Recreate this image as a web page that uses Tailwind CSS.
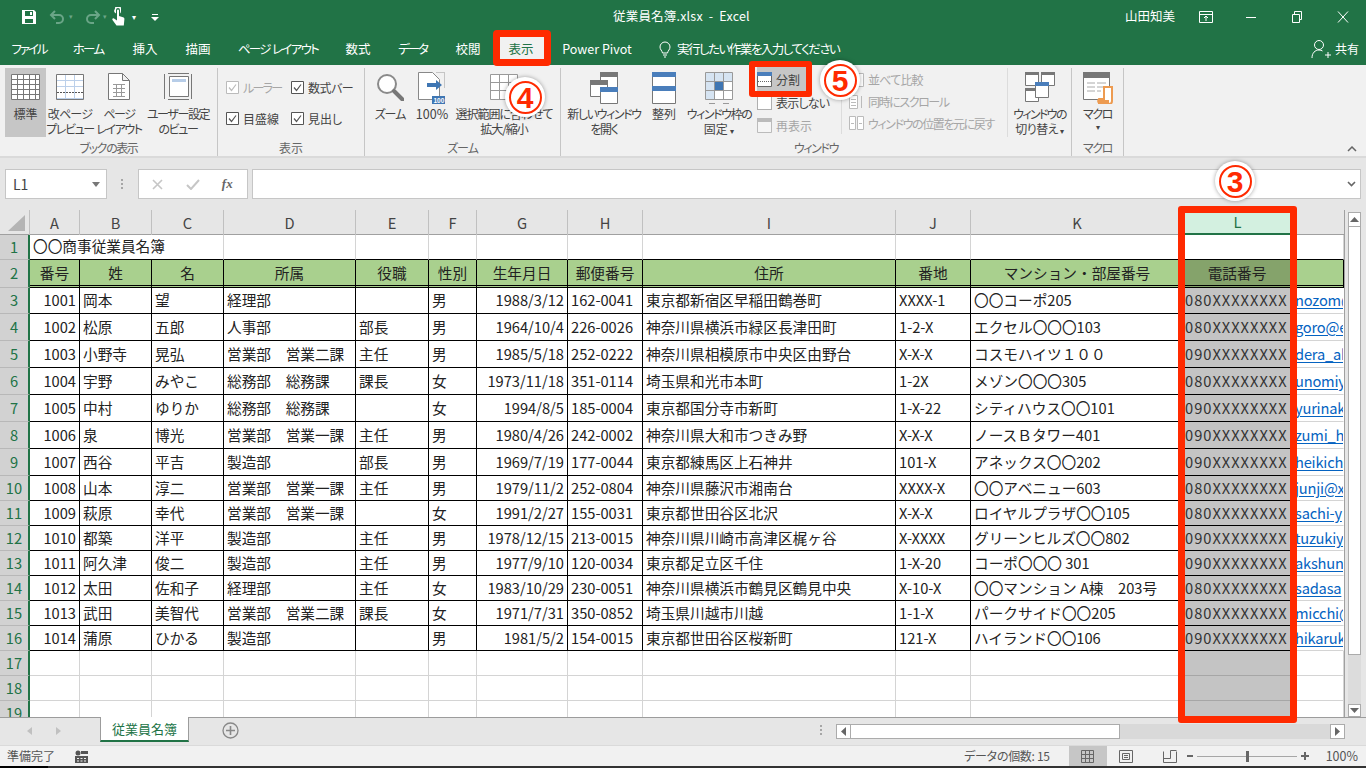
<!DOCTYPE html>
<html lang="ja">
<head>
  <meta charset="UTF-8">
  <title>従業員名簿.xlsx - Excel</title>
  <script src="https://cdn.jsdelivr.net/npm/@tailwindcss/browser@4"></script>
</head>
<body class="relative w-[1366px] h-[768px] overflow-hidden bg-[#e6e6e6] font-['Noto_Sans_CJK_JP','Noto_Sans',sans-serif] text-[#444] text-[12px]">

  <!-- Title bar + tabs -->
  <header class="h-[65px] bg-[#217346] text-white [font-feature-settings:'palt']">
    <div class="relative flex items-center h-[33px]">
      <div class="flex items-center pl-[21px]">
        <svg class="w-[16px] h-[16px]" viewBox="0 0 16 16"><path fill="#fff" d="M1 1h12l2 2v12H1z"/><path fill="#217346" d="M4 2h8v5H4zM4 10h8v4H4z"/><path fill="#fff" d="M9 3h2v3H9z"/></svg>
        <svg class="w-[18px] h-[16px] ml-[12px]" viewBox="0 0 18 16" fill="none" stroke="#6aa587" stroke-width="2"><path d="M6 2 2 6l4 4M2 6h8a4 4 0 0 1 0 8H7"/></svg>
        <span class="ml-[2px] text-[7px] text-[#6aa587]">▾</span>
        <svg class="w-[18px] h-[16px] ml-[10px]" viewBox="0 0 18 16" fill="none" stroke="#6aa587" stroke-width="2"><path d="m12 2 4 4-4 4M16 6H8a4 4 0 0 0 0 8h3"/></svg>
        <span class="ml-[2px] text-[7px] text-[#6aa587]">▾</span>
        <svg class="w-[16px] h-[20px] ml-[3px]" viewBox="0 0 16 20"><path fill="#fff" d="M5 1.5a3 3 0 0 1 6 0V4a4 4 0 0 1-1 2.6V3a2 2 0 0 0-4 0v3.6A4 4 0 0 1 4 4z"/><path fill="#fff" d="M7 3.5a1 1 0 0 1 2 0V9l4 1.2c1 .3 1.5 1 1.4 2l-.6 6.3H6.500L2.500 13c-.7-1 .5-2.200 1.500-1.400L7 13.500z"/></svg>
        <span class="ml-[6px] text-[8px]">▾</span>
        <svg class="w-[8px] h-[8px] ml-[15px]" viewBox="0 0 8 8" fill="#fff"><path d="M1 1h6v1H1zM0 4h8L4 8z"/></svg>
      </div>
      <div class="absolute left-[613px] top-[8px] whitespace-pre text-[12.500px] leading-[16px] tracking-[0.2px]">従業員名簿.xlsx  -  Excel</div>
      <div class="ml-auto flex items-center">
        <span class="text-[12.500px] mr-[24px]">山田知美</span>
        <svg class="w-[14px] h-[14px] mr-[32px]" viewBox="0 0 14 14" fill="none" stroke="#fff"><path d="M.5 1.500h13v11H.5zM.5 4.500h13M7 11V6M5 8l2-2 2 2"/></svg>
        <svg class="w-[12px] h-[12px] mr-[34px]" viewBox="0 0 12 12" stroke="#fff"><path d="M1 6.500h10"/></svg>
        <svg class="w-[12px] h-[12px] mr-[34px]" viewBox="0 0 12 12" fill="none" stroke="#fff"><path d="M1.500 3.500h7v8h-7zM3.500 3.500v-3h7v8h-2"/></svg>
        <svg class="w-[12px] h-[12px] mr-[17px]" viewBox="0 0 12 12" stroke="#fff"><path d="m1 .5 10 11M11 .5 1 11.500"/></svg>
      </div>
    </div>
    <nav class="flex items-center h-[32px] text-[12.500px]">
      <span class="w-[58px] text-center tracking-[-2px]">ファイル</span>
      <span class="w-[60px] text-center tracking-[-1.700px]">ホーム</span>
      <span class="w-[54px] text-center">挿入</span>
      <span class="w-[52px] text-center">描画</span>
      <span class="w-[108px] text-center whitespace-pre tracking-[-1.700px]">ページ  レイアウト</span>
      <span class="w-[52px] text-center">数式</span>
      <span class="w-[57px] text-center tracking-[-2px]">データ</span>
      <span class="w-[54px] text-center">校閲</span>
      <span class="w-[52px] h-[28px] mt-[4px] pb-[4px] flex items-center justify-center bg-[#f1f1f1] text-[#217346]">表示</span>
      <span class="w-[100px] text-center">Power Pivot</span>
      <svg class="w-[12px] h-[17px] ml-[12px]" viewBox="0 0 12 17" fill="none" stroke="#fff"><path d="M3.500 12C3 9.500 1 8.500 1 6a5 5 0 0 1 10 0c0 2.500-2 3.500-2.500 6zM4 14h4M5 16h2"/></svg>
      <span class="ml-[6px] tracking-[-1.500px]">実行したい作業を入力してください</span>
      <svg class="ml-auto w-[20px] h-[20px]" viewBox="0 0 20 20" fill="none" stroke="#fff"><circle cx="8" cy="6" r="4.500"/><path d="M1 19c0-5 3-8 7-8 1.500 0 2.500.4 3.500 1M14 16h6M17 13v6"/></svg>
      <span class="ml-[4px] mr-[7px] text-[12px]">共有</span>
    </nav>
  </header>

  <!-- Ribbon -->
  <section class="relative flex h-[93px] bg-[#f1f1f1] border-b-2 border-[#dadada] [font-feature-settings:'palt'] text-[12px] leading-[15px] whitespace-nowrap tracking-[-1.400px]">

    <!-- ブックの表示 -->
    <div class="flex flex-col shrink-0 w-[218px] mt-[3px] border-r border-[#c6c6c6]">
      <div class="flex h-[74px] pl-[5px]">
        <div class="flex flex-col items-center shrink-0 w-[41px] h-[69px] pt-[6px] bg-[#c6c6c6] tracking-normal">
          <svg class="shrink-0 w-[31px] h-[26px] mb-[6px]" viewBox="0 0 31 26" fill="#fff" stroke="#777"><path d="M1.500.5h28v25h-28z"/><path d="M1 5.500h29M1 10.500h29M1 15.500h29M1 20.500h29M7.500 0v26M13.500 0v26M19.500 0v26M25.500 0v26" fill="none"/></svg>
          <span>標準</span>
        </div>
        <div class="flex flex-col items-center shrink-0 w-[48px] pt-[6px] text-center">
          <svg class="shrink-0 w-[28px] h-[26px] mb-[6px]" viewBox="0 0 28 26" fill="#fff" stroke="#bcd0ea"><path d="M.5.5h27v25H.5z" stroke="#777"/><path d="M1 6.500h26M1 12.500h26M1 24.500h26M9.500 1v24M18.500 1v24" fill="none"/><path d="M1 18.500h26" stroke="#555" stroke-dasharray="2 1"/></svg>
          <span><span class="tracking-[-0.800px]">改ページ</span><br>プレビュー</span>
        </div>
        <div class="flex flex-col items-center shrink-0 w-[50px] pt-[5px] text-center">
          <svg class="shrink-0 w-[22px] h-[27px] mb-[6px]" viewBox="0 0 22 27" fill="#fff" stroke="#777"><path d="M.5.5h14l7 7v19H.5zM14.500.5v7h7"/><path d="M5 11.500h12M5 15.500h12M5 19.500h12M5 23.500h12M8.500 11v13M13.500 11v13" fill="none" stroke="#999"/></svg>
          <span>ページ<br>レイアウト</span>
        </div>
        <div class="flex flex-col items-center shrink-0 w-[68px] pt-[5px] text-center">
          <svg class="shrink-0 w-[28px] h-[27px] mb-[6px]" viewBox="0 0 28 27" fill="none" stroke="#777"><path d="M5.500 3.500h19v20h-19z" fill="#fff"/><path fill="#b7cde8" stroke="none" d="M8 6h14v3H8z"/><path d="M.5 1v25M27.500 1v25M4 .5h21M4 26.500h21"/></svg>
          <span>ユーザー設定<br>のビュー</span>
        </div>
      </div>
      <div class="text-center text-[#666] leading-[16px]">ブックの表示</div>
    </div>

    <!-- 表示 -->
    <div class="flex flex-col shrink-0 w-[147px] mt-[3px] border-r border-[#c6c6c6]">
      <div class="h-[74px] pl-[8px] pt-[11px] flex flex-col gap-[15px] tracking-normal">
        <div class="flex h-[16px] items-center">
          <span class="flex items-center w-[65px] text-[#a6a6a6] tracking-[-1.700px]">
            <svg class="shrink-0 w-[13px] h-[13px] mr-[4px]" viewBox="0 0 13 13" fill="#fff" stroke="#bbb"><path d="M.5.5h12v12H.5z"/><path d="m3 6.500 2.500 3L10 3.500" fill="none" stroke-width="1.200"/></svg>ルーラー
          </span>
          <span class="flex items-center tracking-[-0.500px]">
            <svg class="shrink-0 w-[13px] h-[13px] mr-[4px]" viewBox="0 0 13 13" fill="#fff" stroke="#555"><path d="M.5.5h12v12H.5z"/><path d="m3 6.500 2.500 3L10 3.500" fill="none" stroke-width="1.200"/></svg>数式バー
          </span>
        </div>
        <div class="flex h-[16px] items-center">
          <span class="flex items-center w-[65px]">
            <svg class="shrink-0 w-[13px] h-[13px] mr-[4px]" viewBox="0 0 13 13" fill="#fff" stroke="#555"><path d="M.5.5h12v12H.5z"/><path d="m3 6.500 2.500 3L10 3.500" fill="none" stroke-width="1.200"/></svg>目盛線
          </span>
          <span class="flex items-center">
            <svg class="shrink-0 w-[13px] h-[13px] mr-[4px]" viewBox="0 0 13 13" fill="#fff" stroke="#555"><path d="M.5.5h12v12H.5z"/><path d="m3 6.500 2.500 3L10 3.500" fill="none" stroke-width="1.200"/></svg>見出し
          </span>
        </div>
      </div>
      <div class="text-center text-[#666] leading-[16px] tracking-normal">表示</div>
    </div>

    <!-- ズーム -->
    <div class="flex flex-col shrink-0 w-[196px] mt-[3px] border-r border-[#c6c6c6]">
      <div class="flex h-[74px]">
        <div class="flex flex-col items-center shrink-0 w-[50px] pt-[5px] tracking-[-1px]">
          <svg class="shrink-0 w-[28px] h-[28px] mb-[5px]" viewBox="0 0 28 28" fill="none"><circle cx="11" cy="11" r="9" stroke="#8a8a8a" stroke-width="2" fill="#fff"/><path d="m18 18 8.500 8.500" stroke="#777" stroke-width="4" stroke-linecap="round"/></svg>
          <span>ズーム</span>
        </div>
        <div class="flex flex-col items-center shrink-0 w-[34px] pt-[4px] tracking-normal">
          <svg class="shrink-0 w-[28px] h-[32px] mb-[2px]" viewBox="0 0 28 32"><path d="M.5.5h14l7 7v20H.5z" fill="#fff" stroke="#888"/><path d="M18.500.5h8v16" fill="none" stroke="#999" stroke-dasharray="1 1"/><path d="M9 11h9V8l6 5-6 5v-3H9z" fill="#3f76b3"/><path d="M14 24h13v8H14z" fill="#3f76b3"/><text x="15.500" y="31" font-size="6.500" font-weight="700" fill="#fff" font-family="Liberation Sans">100</text></svg>
          <span class="text-[12.500px]">100%</span>
        </div>
        <div class="flex flex-col items-center shrink-0 w-[98px] ml-[6px] pt-[6px] text-center tracking-[-1px]">
          <svg class="shrink-0 w-[28px] h-[26px] mb-[6px]" viewBox="0 0 28 26" fill="#fff" stroke="#999"><path d="M.5.5h27v25H.5zM.5 8.500h27M.5 16.500h27M9.500 0v26M18.500 0v26"/></svg>
          <span>選択範囲に合わせて<br>拡大/縮小</span>
        </div>
      </div>
      <div class="text-center text-[#666] leading-[16px] tracking-[-1px]">ズーム</div>
    </div>

    <!-- ウィンドウ -->
    <div class="flex flex-col shrink-0 w-[511px] mt-[3px] border-r border-[#c6c6c6]">
      <div class="flex h-[74px]">
        <div class="flex flex-col items-center shrink-0 w-[86px] pt-[4px] text-center">
          <svg class="shrink-0 w-[28px] h-[32px] mb-[2px]" viewBox="0 0 28 32" fill="#fff" stroke="#777"><path d="M10.500.5h17v16h-17z"/><path d="M10 0h18v5H10z" fill="#777" stroke="none"/><path d="M.5 8.500h17v16H.5z"/><path d="M0 8h18v5H0z" fill="#777" stroke="none"/><path d="M10.500 15.500h17v16h-17z"/><path d="M10 15h18v5H10z" fill="#4a7ebb" stroke="none"/></svg>
          <span>新しいウィンドウ<br>を開く</span>
        </div>
        <div class="flex flex-col items-center shrink-0 w-[34px] pt-[4px] tracking-normal">
          <svg class="shrink-0 w-[24px] h-[32px] mb-[2px]" viewBox="0 0 24 32" fill="#fff" stroke="#777"><path d="M.5.5h23v31h-23z"/><path d="M0 0h24v5H0zM0 14h24v5H0z" fill="#4a7ebb" stroke="none"/></svg>
          <span>整列</span>
        </div>
        <div class="flex flex-col items-center shrink-0 w-[76px] pt-[4px] text-center">
          <svg class="shrink-0 w-[28px] h-[32px] mb-[2px]" viewBox="0 0 28 32" fill="#fff" stroke="#999"><path d="M.5.5h27v27H.5zM.5 9.500h27M.5 18.500h27M9.500 0v28M18.500 0v28M4 31.500h6M18 31.500h6"/><path d="M1 1h8v8H1zM1 10h8v8H1zM1 19h8v8H1zM10 1h8v8h-8zM19 1h8v8h-8z" fill="#d6e4f2" stroke="none"/><path d="M10 10h8v8h-8z" fill="#3f76b3" stroke="none"/></svg>
          <span>ウィンドウ枠の<br><span class="tracking-normal">固定 <span class="text-[8px]">▾</span></span></span>
        </div>
        <div class="flex flex-col shrink-0 w-[84px] text-[12px]">
          <div class="flex items-center w-[52px] h-[26px] -mt-[2px] bg-[#c6c6c6] tracking-normal">
            <svg class="shrink-0 w-[15px] h-[15px] mr-[4px]" viewBox="0 0 15 15" fill="#fff" stroke="#666"><path d="M.5.5h14v14H.5z"/><path d="M0 0h15v4H0z" fill="#4a7ebb" stroke="none"/><path d="M1 9.500h13" stroke-dasharray="1 1"/></svg>分割
          </div>
          <div class="flex items-center h-[23px] -mt-[1px] tracking-[-0.800px]">
            <svg class="shrink-0 w-[15px] h-[15px] mr-[4px]" viewBox="0 0 15 15" fill="#fff" stroke="#666" stroke-dasharray="1 1"><path d="M.5.5h14v14H.5z"/></svg>表示しない
          </div>
          <div class="flex items-center h-[23px] text-[#a6a6a6] tracking-normal">
            <svg class="shrink-0 w-[15px] h-[15px] mr-[4px]" viewBox="0 0 15 15" fill="#f5f5f5" stroke="#bbb"><path d="M.5.500h14v14H.5z"/><path d="M0 0h15v4H0z" fill="#bbb" stroke="none"/></svg>再表示
          </div>
        </div>
        <div class="flex flex-col shrink-0 w-[166px] h-[66px] pl-[7px] pt-[1px] text-[#a6a6a6] border-l border-[#dcdcdc]">
          <div class="flex items-center h-[23px] tracking-[-0.800px]">
            <svg class="shrink-0 w-[15px] h-[14px] mr-[4px]" viewBox="0 0 15 14" fill="#fff" stroke="#bbb"><path d="M.5.5h6v13h-6zM8.500.5h6v13h-6z"/></svg>並べて比較
          </div>
          <div class="flex items-center h-[23px]">
            <svg class="shrink-0 w-[15px] h-[14px] mr-[4px]" viewBox="0 0 15 14" fill="#fff" stroke="#bbb"><path d="M.5.5h8v13h-8zM2 4.500h5M2 7.500h5M2 10.500h5M12.500 1v12"/></svg>同時にスクロール
          </div>
          <div class="flex items-center h-[23px]">
            <svg class="shrink-0 w-[15px] h-[14px] mr-[4px]" viewBox="0 0 15 14" fill="#fff" stroke="#bbb"><path d="M.5.5h6v13h-6zM8.500.5h6v13h-6zM2 7.500h3M10 7.500h3"/></svg>ウィンドウの位置を元に戻す
          </div>
        </div>
        <div class="flex flex-col items-center shrink-0 w-[64px] h-[69px] pt-[4px] text-center border-l border-[#dcdcdc] tracking-[-1.700px]">
          <svg class="shrink-0 w-[30px] h-[30px] mb-[4px]" viewBox="0 0 30 30" fill="#fff" stroke="#777"><path d="M.5.5h13v13H.5zM16.500.5h13v13h-13zM.5 16.500h13v13H.5z"/><path d="M0 0h14v3H0zM16 0h14v3H16zM0 16h14v3H0z" fill="#777" stroke="none"/><path d="M10.500 10.500h13v15h-13z"/><path d="M10 10h14v4H10z" fill="#4a7ebb" stroke="none"/></svg>
          <span>ウィンドウの<br><span class="tracking-[-0.500px]">切り替え <span class="text-[8px]">▾</span></span></span>
        </div>
      </div>
      <div class="text-center text-[#666] leading-[16px]">ウィンドウ</div>
    </div>

    <!-- マクロ -->
    <div class="flex flex-col shrink-0 w-[52px] mt-[3px] border-r border-[#c6c6c6]">
      <div class="flex flex-col items-center h-[74px] pt-[4px] text-center">
        <svg class="shrink-0 w-[30px] h-[32px] mb-[2px]" viewBox="0 0 30 32"><path d="M.5.5h26v27H.5z" fill="#fff" stroke="#777"/><path d="M0 0h27v6H0z" fill="#777"/><path d="M4 11h8M14 11h9M4 15h8M14 15h9M4 19h8M14 19h4" stroke="#aaa"/><path d="M21 15h8v14a3 3 0 0 1-3 3h-8a3 3 0 0 1-2-5h5z" fill="#fff" stroke="#ed9b51" stroke-width="2"/><path d="M15 28h11v4H15z" fill="#ed9b51"/></svg>
        <span>マクロ</span>
        <span class="text-[8px] leading-[12px]">▾</span>
      </div>
      <div class="text-center text-[#666] leading-[16px]">マクロ</div>
    </div>

    <svg class="absolute left-[1347px] top-[81px] w-[10px] h-[6px]" viewBox="0 0 10 6" fill="none" stroke="#666" stroke-width="1.500"><path d="m1 5 4-4 4 4"/></svg>
  </section>

  <!-- Formula bar -->
  <div class="flex h-[52px] pt-[11px] pl-[5px] pr-[5px]">
    <div class="flex items-center justify-between w-[102px] h-[30px] pl-[7px] pr-[4px] bg-white border border-[#c6c6c6] text-[14px] text-[#444]">
      L1
      <svg class="w-[8px] h-[5px] mr-[2px]" viewBox="0 0 8 5" fill="#777"><path d="M0 0h8L4 5z"/></svg>
    </div>
    <div class="flex flex-col justify-center gap-[2px] w-[31px] h-[30px] items-center">
      <i class="w-[2px] h-[2px] bg-[#a6a6a6]"></i><i class="w-[2px] h-[2px] bg-[#a6a6a6]"></i><i class="w-[2px] h-[2px] bg-[#a6a6a6]"></i>
    </div>
    <div class="flex items-center w-[110px] h-[30px] bg-white border border-[#c6c6c6]">
      <svg class="w-[11px] h-[11px] ml-[13px]" viewBox="0 0 11 11" stroke="#c6c6c6" stroke-width="1.600"><path d="m1 1 9 9M10 1l-9 9"/></svg>
      <svg class="w-[14px] h-[11px] ml-[23px]" viewBox="0 0 14 11" fill="none" stroke="#c6c6c6" stroke-width="2"><path d="m1 6 4 4 8-9"/></svg>
      <span class="ml-[22px] font-['Liberation_Serif',serif] italic font-bold text-[13px] text-[#666]">fx</span>
    </div>
    <div class="flex items-center justify-end w-[1111px] h-[30px] ml-[4px] pr-[4px] bg-white border border-[#c6c6c6]">
      <svg class="w-[9px] h-[6px]" viewBox="0 0 9 6" fill="none" stroke="#666" stroke-width="1.600"><path d="m1 1 3.500 3.500L8 1"/></svg>
    </div>
  </div>

  <!-- Sheet -->
  <div class="flex h-[507px]">
    <div class="w-[1345px] overflow-hidden border-r border-[#a0a0a0]" id="sheet">
      <!-- Column headers -->
      <div class="grid grid-cols-[30px_50px_72px_72px_132px_73px_48px_91px_75px_253px_75px_213px_107px_53px] h-[25px] text-[14.670px] text-[#444] border-b border-[#a0a0a0]">
        <div class="flex items-center justify-center border-r border-[#c0c0c0]">
          <svg class="w-[17px] h-[16px] ml-[3px]" viewBox="0 0 17 16" fill="#b4b4b4"><path d="M17 0v16H0z"/></svg>
        </div>
        <div class="flex items-center justify-center border-r border-[#c0c0c0]">A</div>
        <div class="flex items-center justify-center border-r border-[#c0c0c0]">B</div>
        <div class="flex items-center justify-center border-r border-[#c0c0c0]">C</div>
        <div class="flex items-center justify-center border-r border-[#c0c0c0]">D</div>
        <div class="flex items-center justify-center border-r border-[#c0c0c0]">E</div>
        <div class="flex items-center justify-center border-r border-[#c0c0c0]">F</div>
        <div class="flex items-center justify-center border-r border-[#c0c0c0]">G</div>
        <div class="flex items-center justify-center border-r border-[#c0c0c0]">H</div>
        <div class="flex items-center justify-center border-r border-[#c0c0c0]">I</div>
        <div class="flex items-center justify-center border-r border-[#c0c0c0]">J</div>
        <div class="flex items-center justify-center border-r border-[#c0c0c0]">K</div>
        <div class="flex items-center justify-center h-[25px] bg-[#d3f0e0] text-[#217346] border-b-2 border-[#217346]">L</div>
        <div></div>
      </div>
      <div id="rows"></div>
    </div>

    <!-- Vertical scrollbar -->
    <div class="flex flex-col w-[21px] pl-[3px] pr-[5px] pt-[2px]">
      <div class="flex items-center justify-center h-[15px] bg-white border border-[#ababab]">
        <svg class="w-[9px] h-[5px]" viewBox="0 0 9 5" fill="#666"><path d="M4.500 0 9 5H0z"/></svg>
      </div>
      <div class="h-[428px] bg-white border border-t-0 border-[#ababab]"></div>
      <div class="h-[49px] bg-[#dcdcdc]"></div>
      <div class="flex items-center justify-center h-[13px] bg-white border border-[#ababab]">
        <svg class="w-[9px] h-[5px]" viewBox="0 0 9 5" fill="#666"><path d="M0 0h9L4.500 5z"/></svg>
      </div>
    </div>
  </div>

  <!-- Sheet tabs -->
  <div class="flex items-start h-[28px] border-t border-[#9c9c9c] bg-[#e6e6e6]">
    <svg class="w-[5px] h-[8px] ml-[27px] mt-[9px]" viewBox="0 0 5 8" fill="#c0c0c0"><path d="M5 0v8L0 4z"/></svg>
    <svg class="w-[5px] h-[8px] ml-[24px] mt-[9px]" viewBox="0 0 5 8" fill="#c0c0c0"><path d="m0 0 5 4-5 4z"/></svg>
    <div class="flex items-center justify-center w-[89px] h-[25px] ml-[39px] -mt-[1px] bg-white border-x border-[#9c9c9c] border-b-2 border-b-[#217346] text-[#217346] text-[13px]">従業員名簿</div>
    <svg class="w-[17px] h-[17px] ml-[33px] mt-[4px]" viewBox="0 0 17 17" fill="none" stroke="#888"><circle cx="8.500" cy="8.500" r="7.500" stroke-width="1.300"/><path d="M8.500 4v9M4 8.500h9" stroke-width="1.600"/></svg>
    <div class="flex flex-col gap-[2px] ml-[581px] mt-[7px]">
      <i class="w-[2px] h-[2px] bg-[#a6a6a6]"></i><i class="w-[2px] h-[2px] bg-[#a6a6a6]"></i><i class="w-[2px] h-[2px] bg-[#a6a6a6]"></i>
    </div>
    <div class="flex w-[509px] h-[15px] ml-[14px] mt-[6px] bg-[#d9d9d9]">
      <div class="flex items-center justify-center w-[15px] bg-white border border-[#ababab]">
        <svg class="w-[5px] h-[9px]" viewBox="0 0 5 9" fill="#666"><path d="M5 0v9L0 4.500z"/></svg>
      </div>
      <div class="w-[269px] bg-white border border-l-0 border-[#ababab]"></div>
      <div class="flex items-center justify-center w-[15px] ml-auto bg-white border border-[#ababab]">
        <svg class="w-[5px] h-[9px]" viewBox="0 0 5 9" fill="#666"><path d="m0 0 5 4.500L0 9z"/></svg>
      </div>
    </div>
  </div>

  <!-- Status bar -->
  <footer class="flex items-center h-[21px] bg-[#f1f1f1] border-t border-[#dadada] [font-feature-settings:'palt'] text-[#555]">
    <span class="ml-[7px] text-[12px]">準備完了</span>
    <svg class="w-[13px] h-[13px] ml-[20px]" viewBox="0 0 13 13" fill="#555"><circle cx="3" cy="3" r="2.500"/><path d="M6 1h7v3H6zM0 6h13v7H0z"/><path d="M2 8h2v1H2zM5.500 8h2v1h-2zM9 8h2v1H9zM2 10.500h2v1H2zM5.500 10.500h2v1h-2zM9 10.500h2v1H9z" fill="#f1f1f1"/></svg>
    <span class="ml-auto text-[12px] tracking-[-0.300px]">データの個数: 15</span>
    <div class="flex items-center justify-center w-[38px] h-[20px] ml-[19px] bg-[#c6c6c6]">
      <svg class="w-[13px] h-[13px]" viewBox="0 0 13 13" fill="none" stroke="#666"><path d="M.5.5h12v12H.5zM.5 4.500h12M.5 8.500h12M4.500 0v13M8.500 0v13"/></svg>
    </div>
    <svg class="w-[14px] h-[13px] ml-[12px]" viewBox="0 0 14 13" fill="none" stroke="#666"><path d="M.5.5h13v12H.5zM3.500 3.500h7v6h-7zM5 5.500h4M5 7.500h4"/></svg>
    <svg class="w-[14px] h-[13px] ml-[30px]" viewBox="0 0 14 13" fill="none" stroke="#666"><path d="M.5 1.500v11h13v-11M.5 8.500h7v-8h6"/></svg>
    <span class="w-[6px] h-[2px] ml-[10px] bg-[#666]"></span>
    <div class="relative w-[100px] h-[1px] ml-[4px] bg-[#a6a6a6]">
      <i class="absolute left-[49px] -top-[5px] w-[3px] h-[11px] bg-[#666]"></i>
    </div>
    <svg class="w-[8px] h-[8px] ml-[4px]" viewBox="0 0 8 8" stroke="#666" stroke-width="2"><path d="M0 4h8M4 0v8"/></svg>
    <span class="ml-[17px] mr-[8px] text-[12.500px]">100%</span>
  </footer>
  <div class="flex h-[2px] bg-[#333]"><i class="w-[48px] bg-black"></i></div>

  <!-- Annotations -->
  <div class="absolute left-[493px] top-[30px] w-[58px] h-[36px] border-[7px] border-[#ff2a00] rounded-[4px]"></div>
  <div class="absolute left-[749px] top-[61px] w-[63px] h-[36px] border-[6px] border-[#ff2a00] rounded-[3px]"></div>
  <div class="absolute left-[1178px] top-[206px] w-[119px] h-[517px] border-[7px] border-[#ff2a00] rounded-[3px]"></div>
  <div class="absolute left-[505px] top-[77px] flex items-center justify-center w-[40px] h-[40px] rounded-full bg-white shadow-[0_0_4px_rgba(0,0,0,0.35)]">
    <div class="flex items-center justify-center w-[33px] h-[33px] rounded-full border-2 border-[#ff2a00] text-[#ff2a00] font-bold text-[30px] font-['Liberation_Sans',sans-serif]">4</div>
  </div>
  <div class="absolute left-[820px] top-[60px] flex items-center justify-center w-[40px] h-[40px] rounded-full bg-white shadow-[0_0_4px_rgba(0,0,0,0.35)]">
    <div class="flex items-center justify-center w-[33px] h-[33px] rounded-full border-2 border-[#ff2a00] text-[#ff2a00] font-bold text-[30px] font-['Liberation_Sans',sans-serif]">5</div>
  </div>
  <div class="absolute left-[1215px] top-[161px] flex items-center justify-center w-[40px] h-[40px] rounded-full bg-white shadow-[0_0_4px_rgba(0,0,0,0.35)]">
    <div class="flex items-center justify-center w-[33px] h-[33px] rounded-full border-2 border-[#ff2a00] text-[#ff2a00] font-bold text-[30px] font-['Liberation_Sans',sans-serif]">3</div>
  </div>

  <script>
    const gridCls = 'grid grid-cols-[30px_50px_72px_72px_132px_73px_48px_91px_75px_253px_75px_213px_107px_53px] text-[14.670px] text-[#222]';
    const cellCls = 'flex items-center overflow-hidden whitespace-pre px-[3px] pb-[1px] border-r border-b ';
    const rowHead = 'flex items-center justify-center pb-[1px] bg-[#d2d2d2] text-[#217346] border-r-2 border-r-[#217346] border-b border-b-[#b8b8b8]';

    const header = ['番号', '姓', '名', '所属', '役職', '性別', '生年月日', '郵便番号', '住所', '番地', 'マンション・部屋番号', '電話番号', ''];
    const people = [
      ['1001', '岡本', '望', '経理部', '', '男', '1988/3/12', '162-0041', '東京都新宿区早稲田鶴巻町', 'XXXX-1', '〇〇コーポ205', '080XXXXXXXX', 'nozom@'],
      ['1002', '松原', '五郎', '人事部', '部長', '男', '1964/10/4', '226-0026', '神奈川県横浜市緑区長津田町', '1-2-X', 'エクセル〇〇〇103', '080XXXXXXXX', 'goro@e'],
      ['1003', '小野寺', '晃弘', '営業部　営業二課', '主任', '男', '1985/5/18', '252-0222', '神奈川県相模原市中央区由野台', 'X-X-X', 'コスモハイツ１００', '090XXXXXXXX', 'dera_ak'],
      ['1004', '宇野', 'みやこ', '総務部　総務課', '課長', '女', '1973/11/18', '351-0114', '埼玉県和光市本町', '1-2X', 'メゾン〇〇〇305', '080XXXXXXXX', 'unomiy'],
      ['1005', '中村', 'ゆりか', '総務部　総務課', '', '女', '1994/8/5', '185-0004', '東京都国分寺市新町', '1-X-22', 'シティハウス〇〇101', '090XXXXXXXX', 'yurinak'],
      ['1006', '泉', '博光', '営業部　営業一課', '主任', '男', '1980/4/26', '242-0002', '神奈川県大和市つきみ野', 'X-X-X', 'ノースＢタワー401', '090XXXXXXXX', 'zumi_h'],
      ['1007', '西谷', '平吉', '製造部', '部長', '男', '1969/7/19', '177-0044', '東京都練馬区上石神井', '101-X', 'アネックス〇〇202', '090XXXXXXXX', 'heikich'],
      ['1008', '山本', '淳二', '営業部　営業一課', '主任', '男', '1979/11/2', '252-0804', '神奈川県藤沢市湘南台', 'XXXX-X', '〇〇アベニュー603', '080XXXXXXXX', 'junji@x'],
      ['1009', '萩原', '幸代', '営業部　営業一課', '', '女', '1991/2/27', '155-0031', '東京都世田谷区北沢', 'X-X-X', 'ロイヤルプラザ〇〇105', '080XXXXXXXX', 'sachi-y'],
      ['1010', '都築', '洋平', '製造部', '主任', '男', '1978/12/15', '213-0015', '神奈川県川崎市高津区梶ヶ谷', 'X-XXXX', 'グリーンヒルズ〇〇802', '090XXXXXXXX', 'tuzukiy'],
      ['1011', '阿久津', '俊二', '製造部', '主任', '男', '1977/9/10', '120-0034', '東京都足立区千住', '1-X-20', 'コーポ〇〇〇 301', '090XXXXXXXX', 'akshun'],
      ['1012', '太田', '佐和子', '経理部', '主任', '女', '1983/10/29', '230-0051', '神奈川県横浜市鶴見区鶴見中央', 'X-10-X', '〇〇マンション A棟　203号', '080XXXXXXXX', 'sadasa'],
      ['1013', '武田', '美智代', '営業部　営業二課', '課長', '女', '1971/7/31', '350-0852', '埼玉県川越市川越', '1-1-X', 'パークサイド〇〇205', '080XXXXXXXX', 'micchi@'],
      ['1014', '蒲原', 'ひかる', '製造部', '', '男', '1981/5/2', '154-0015', '東京都世田谷区桜新町', '121-X', 'ハイランド〇〇106', '090XXXXXXXX', 'hikaruk'],
    ];
    const rowHeights = [26, 27, 27, 27, 27, 27, 27, 25, 25, 25, 25, 25, 25, 25];

    let html = '';

    // row 1: title, overflowing across A-C
    html += `<div class="${gridCls} bg-white" style="height:25px">
      <div class="${rowHead}">1</div>
      <div class="${cellCls} !pb-[3px] col-span-3 border-r-[#d4d4d4] border-b-black">〇〇商事従業員名簿</div>`;
    for (let i = 3; i < 13; i++) {
      html += `<div class="${cellCls} border-r-[#d4d4d4] border-b-black"></div>`;
    }
    html += '</div>';

    // row 2: table header
    html += `<div class="${gridCls}" style="height:28px"><div class="${rowHead} border-b-[#b8b8b8]">2</div>`;
    header.forEach((text, i) => {
      const bg = i === 11 ? 'bg-[#85a36b]' : 'bg-[#a9d08e]';
      html += `<div class="flex items-center justify-center overflow-hidden whitespace-nowrap border-r border-r-black border-b-[3px] border-double border-b-black ${bg}">${text}</div>`;
    });
    html += '</div>';

    // rows 3-16
    people.forEach((person, r) => {
      html += `<div class="${gridCls} bg-white" style="height:${rowHeights[r]}px"><div class="${rowHead}">${r + 3}</div>`;
      person.forEach((text, i) => {
        if (i === 11) {
          html += `<div class="${cellCls} !px-[1px] tracking-[1px] bg-[#c4c4c4] text-[#333] border-r-black border-b-black">${text}</div>`;
        } else if (i === 12) {
          html += `<div class="${cellCls} !px-[4px] tracking-[-0.200px] text-[#0563c1] underline underline-offset-2 border-r-transparent border-b-[#d4d4d4]">${text}</div>`;
        } else {
          const align = (i === 0 || i === 6) ? 'justify-end' : '';
          html += `<div class="${cellCls} ${align} border-r-black border-b-black">${text}</div>`;
        }
      });
      html += '</div>';
    });

    // rows 17-19: empty
    [[17, 25], [18, 25], [19, 17]].forEach(([no, h]) => {
      html += `<div class="${gridCls} bg-white overflow-hidden" style="height:${h}px"><div class="${rowHead} ${no === 19 ? 'h-[25px]' : ''}">${no}</div>`;
      for (let i = 0; i < 13; i++) {
        const cls = i === 11 ? 'bg-[#c4c4c4] border-r-[#a6a6a6] border-b-[#a6a6a6]' : 'border-r-[#d4d4d4] border-b-[#d4d4d4]';
        html += `<div class="border-r border-b ${cls} ${no === 19 ? 'h-[25px]' : ''}"></div>`;
      }
      html += '</div>';
    });

    document.getElementById('rows').innerHTML = html;
  </script>
</body>
</html>
